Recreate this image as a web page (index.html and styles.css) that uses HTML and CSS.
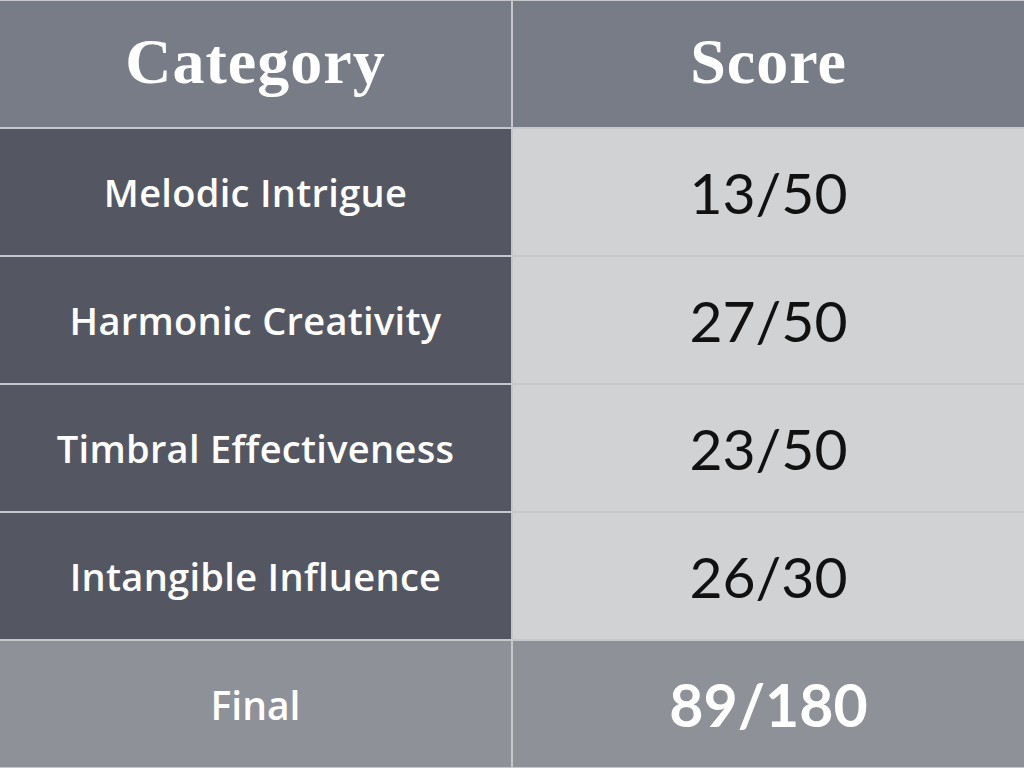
FILE: index.html
```html
<!DOCTYPE html>
<html>
<head>
<meta charset="utf-8">
<link rel="stylesheet" href="styles.css">
</head>
<body>
<div class="table">
  <div class="cell head">Category</div>
  <div class="cell head">Score</div>
  <div class="cell name">Melodic Intrigue</div>
  <div class="cell score">13/50</div>
  <div class="cell name">Harmonic Creativity</div>
  <div class="cell score">27/50</div>
  <div class="cell name">Timbral Effectiveness</div>
  <div class="cell score">23/50</div>
  <div class="cell name">Intangible Influence</div>
  <div class="cell score">26/30</div>
  <div class="cell final-name">Final</div>
  <div class="cell final-score">89/180</div>
</div>
</body>
</html>
```
FILE: styles.css
```css
html, body {
  margin: 0;
  padding: 0;
  width: 1024px;
  height: 768px;
  overflow: hidden;
}
.table {
  display: grid;
  grid-template-columns: 511px 511px;
  grid-template-rows: repeat(6, 1fr);
  column-gap: 2px;
  row-gap: 2px;
  padding: 1px 0;
  box-sizing: border-box;
  height: 768px;
  background: #c6c7cb;
}
.cell {
  display: flex;
  align-items: center;
  justify-content: center;
  font-family: "Lato", "Open Sans", sans-serif;
}
.head {
  background: #787c86;
  color: #fff;
  font-family: "Liberation Serif", "DejaVu Serif", serif;
  font-weight: 700;
  font-size: 64px;
  letter-spacing: 1px;
  padding-bottom: 4px;
}
.name {
  background: #545762;
  color: #fff;
  font-family: "Open Sans", "Lato", sans-serif;
  font-size: 38px;
  font-weight: 600;
  letter-spacing: 0.3px;
}
.score {
  background: #d1d2d4;
  color: #111;
  font-size: 57px;
  font-weight: 400;
}
.final-name {
  background: #8f9199;
  color: #fff;
  font-family: "Open Sans", "Lato", sans-serif;
  font-size: 39px;
  font-weight: 600;
}
.final-score {
  background: #8f9199;
  color: #fff;
  font-size: 59px;
  font-weight: 700;
}
```
